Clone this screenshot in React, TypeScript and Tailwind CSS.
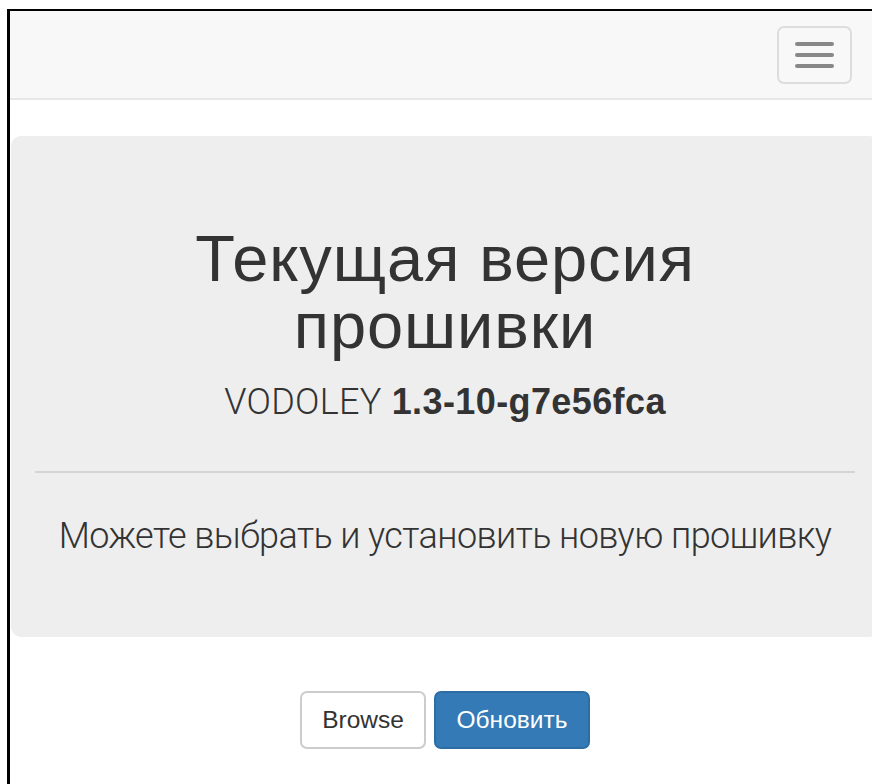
import React from "react";

const sans = { fontFamily: '"Liberation Sans", Arial, sans-serif' };
const light = { fontFamily: 'Roboto, "Liberation Sans", sans-serif' };

function MenuToggle() {
  return (
    <button
      type="button"
      aria-label="Toggle navigation"
      className="mt-[15px] mr-[28px] flex h-[58px] w-[75px] flex-col items-center justify-center gap-[7px] rounded-[7px] border-2 border-[#dddddd] bg-transparent"
    >
      <span className="block h-[4px] w-[39px] rounded-[2px] bg-[#888888]" />
      <span className="block h-[4px] w-[39px] rounded-[2px] bg-[#888888]" />
      <span className="block h-[4px] w-[39px] rounded-[2px] bg-[#888888]" />
    </button>
  );
}

export default function App() {
  return (
    <div className="h-screen w-full overflow-hidden bg-white text-[#333333]" style={sans}>
      <div className="ml-[7px] mt-[9px] w-[873px] border-l-[3px] border-t-2 border-black pb-[60px]">
        <nav className="flex h-[89px] items-start justify-end border-b-2 border-[#e7e7e7] bg-[#f8f8f8]">
          <MenuToggle />
        </nav>

        <section className="ml-[1px] mt-[36px] h-[501px] w-[868px] rounded-[10px] bg-[#eeeeee] px-[24px] pt-[89px] text-center">
          <h1 className="text-[65px] leading-[67px] font-normal tracking-[0.9px]" style={sans}>
            Текущая версия
            <br />
            прошивки
          </h1>
          <p className="mt-[23px] text-[36px] leading-[40px]">
            <span className="font-light tracking-[0.3px]" style={light}>
              VODOLEY
            </span>{" "}
            <strong className="font-bold tracking-[0.4px]" style={sans}>
              1.3-10-g7e56fca
            </strong>
          </p>
          <hr className="mt-[49px] border-0 border-t-2 border-[#d5d5d5]" />
          <p className="mt-[43px] text-[36px] leading-[40px] font-light tracking-[-0.6px]" style={light}>
            Можете выбрать и установить новую прошивку
          </p>
        </section>

        <div className="mt-[54px] flex justify-center gap-[8px]">
          <button
            type="button"
            className="h-[58px] w-[126px] rounded-[7px] border-2 border-[#cccccc] bg-white text-[24.5px] text-[#333333]"
            style={sans}
          >
            Browse
          </button>
          <button
            type="button"
            className="h-[58px] w-[156px] rounded-[7px] border-2 border-[#2e6da4] bg-[#337ab7] text-[24.5px] text-white"
            style={sans}
          >
            Обновить
          </button>
        </div>
      </div>
    </div>
  );
}
